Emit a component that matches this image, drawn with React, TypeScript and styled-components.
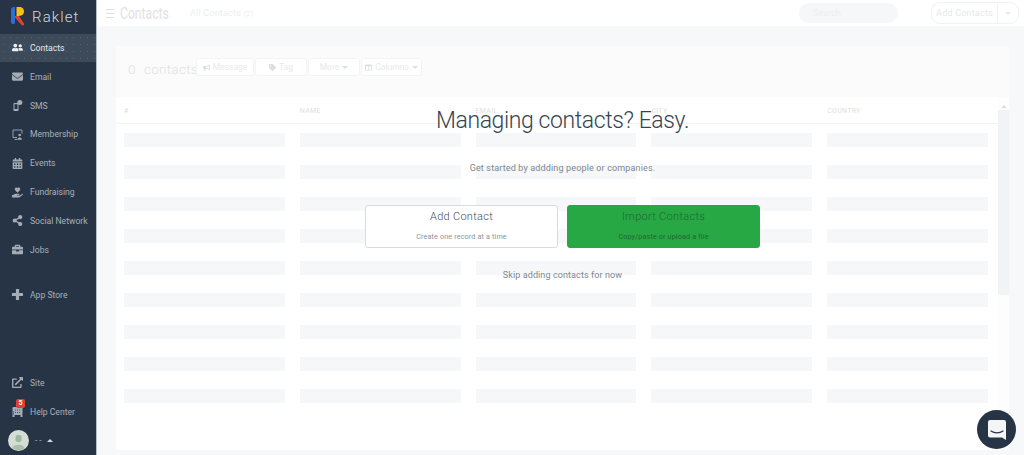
import * as React from 'react';
import styled, { createGlobalStyle } from 'styled-components';
import {
  FaUserFriends, FaEnvelope, FaCalendarAlt, FaHandHoldingHeart, FaShareAlt,
  FaBriefcase, FaExternalLinkAlt, FaBullhorn, FaTag, FaColumns,
} from 'react-icons/fa';

const navy = '#263445';
const font = 'Roboto, "Open Sans", sans-serif';

const Global = createGlobalStyle`
  html, body { margin: 0; padding: 0; height: 100%; overflow: hidden; }
  body { font-family: ${font}; background: #f7f8fa; }
  #root { height: 100%; }
`;

const Page = styled.div`
  display: flex;
  width: 1024px;
  height: 455px;
  overflow: hidden;
`;

const Sidebar = styled.nav`
  width: 96px;
  flex: none;
  display: flex;
  flex-direction: column;
  background: ${navy};
  border-right: 1px solid #b9bfc6;
`;

const Brand = styled.div`
  height: 33.5px;
  flex: none;
  display: flex;
  align-items: center;
  padding-left: 10px;
  gap: 7px;
  color: #d5d9dd;
  font-size: 15px;
  font-weight: 300;
  letter-spacing: 1.1px;
`;

const NavItem = styled.a<{ $active?: boolean }>`
  position: relative;
  height: 28.85px;
  flex: none;
  display: flex;
  align-items: center;
  padding-left: 12px;
  gap: 7px;
  font-size: 8.6px;
  white-space: nowrap;
  color: ${p => (p.$active ? '#e6e9ec' : '#a9b1ba')};
  background: ${p => (p.$active
    ? 'radial-gradient(#566270 0.7px, transparent 0.9px) 0 0 / 7px 7px, #3d4a59'
    : 'transparent')};
  svg { width: 11px; height: 11px; flex: none; color: ${p => (p.$active ? '#eef0f2' : '#a4acb5')}; }
`;

const Spacer = styled.div<{ $h?: number }>`
  flex: ${p => (p.$h ? `0 0 ${p.$h}px` : 1)};
`;

const Badge = styled.span`
  position: absolute;
  left: 16px;
  top: 2px;
  width: 9px;
  height: 9px;
  border-radius: 2px;
  background: #e2402f;
  color: #fff;
  font-size: 7px;
  font-weight: 700;
  line-height: 9px;
  text-align: center;
`;

const UserRow = styled.div`
  height: 29px;
  flex: none;
  display: flex;
  align-items: center;
  gap: 6px;
  padding-left: 8px;
  color: #c6cbd1;
  font-size: 8px;
`;

const Caret = styled.span<{ $up?: boolean; $color?: string }>`
  width: 0;
  height: 0;
  display: inline-block;
  border-left: 3px solid transparent;
  border-right: 3px solid transparent;
  ${p => (p.$up ? 'border-bottom' : 'border-top')}: 3px solid ${p => p.$color || '#d7dadd'};
`;

const Main = styled.main`
  flex: 1;
  min-width: 0;
  display: flex;
  flex-direction: column;
  position: relative;
`;

const TopBar = styled.header`
  height: 26px;
  flex: none;
  background: #fff;
  display: flex;
  align-items: center;
  padding: 0 5px 0 9px;
`;

const Burger = styled.span`
  width: 8px;
  height: 7px;
  border-top: 1px solid #dde0e3;
  border-bottom: 1px solid #dde0e3;
  position: relative;
  margin-right: 6px;
  &::after { content: ''; position: absolute; left: 0; right: 0; top: 3px; height: 1px; background: #dde0e3; }
`;

const PageTitle = styled.h1`
  margin: 0 27px 0 0;
  font-size: 16px;
  font-weight: 400;
  color: #dfe2e5;
  transform: scaleX(0.76);
  transform-origin: left;
  width: 43px;
`;

const Crumb = styled.span`
  font-size: 9px;
  color: #eceef0;
  letter-spacing: 0.2px;
  span { font-size: 7px; margin-left: 3px; }
`;

const Search = styled.div`
  margin-left: auto;
  width: 99px;
  height: 20px;
  box-sizing: border-box;
  padding-left: 14px;
  border-radius: 10px;
  background: #f6f7f9;
  color: #eceef0;
  font-size: 9px;
  line-height: 20px;
`;

const AddSplit = styled.div`
  margin-left: 33px;
  width: 88px;
  height: 22px;
  box-sizing: border-box;
  border: 1px solid #f1f2f4;
  border-radius: 9px;
  display: flex;
  align-items: center;
  color: #e6e8eb;
  font-size: 9px;
  letter-spacing: 0.2px;
`;

const AddLabel = styled.span`
  flex: 1;
  text-align: center;
  line-height: 20px;
  border-right: 1px solid #f1f2f4;
`;

const AddCaret = styled.span`
  width: 20px;
  display: flex;
  justify-content: center;
`;

const Content = styled.section`
  flex: 1;
  min-height: 0;
  padding: 20px 15px 5px 19px;
  display: flex;
`;

const Card = styled.div`
  flex: 1;
  display: flex;
  flex-direction: column;
  background: #fff;
`;

const CardHead = styled.div`
  height: 51px;
  flex: none;
  box-sizing: border-box;
  background: #fbfbfc;
  display: flex;
  align-items: flex-start;
  padding: 12px 0 0 12px;
`;

const Count = styled.div`
  font-size: 13.5px;
  line-height: 18px;
  font-weight: 300;
  color: #dfe2e5;
  letter-spacing: 0.3px;
  width: 68px;
  white-space: nowrap;
  word-spacing: 4.5px;
  padding-top: 2px;
`;

const ToolBtn = styled.div<{ $w: number }>`
  width: ${p => p.$w}px;
  height: 18px;
  margin-right: 1px;
  box-sizing: border-box;
  border: 1px solid #f3f4f5;
  border-radius: 3px;
  background: #fff;
  display: flex;
  align-items: center;
  justify-content: center;
  gap: 3px;
  color: #e8eaec;
  font-size: 8.5px;
  svg { width: 7px; height: 7px; color: #dcdfe2; }
`;

const TableWrap = styled.div`
  flex: 1;
  min-height: 0;
  display: flex;
`;

const Table = styled.div`
  flex: 1;
  min-width: 0;
  padding: 0 9px 0 8px;
`;

const Cols = styled.div`
  display: grid;
  grid-template-columns: repeat(5, 160.8px);
  column-gap: 15px;
`;

const HeadRow = styled(Cols)`
  height: 27px;
  box-sizing: border-box;
  align-items: center;
  border-bottom: 1px solid #f3f4f6;
  margin: 0 -9px 9px -8px;
  padding: 2px 9px 0 8px;
`;

const HeadCell = styled.div`
  font-size: 7px;
  color: #dcdfe2;
  letter-spacing: 0.3px;
`;

const BodyRow = styled(Cols)`
  margin-bottom: 18px;
`;

const Skeleton = styled.div`
  height: 14px;
  background: #f6f7f9;
`;

const Scroll = styled.div`
  width: 11px;
  flex: none;
  display: flex;
  flex-direction: column;
  align-items: center;
  background: #fdfdfd;
  padding-top: 8px;
`;

const Thumb = styled.div`
  width: 11px;
  height: 185px;
  margin-top: 2px;
  background: #f2f3f4;
`;

const Overlay = styled.div`
  position: absolute;
  left: 19px;
  right: 15px;
  top: 0;
  text-align: center;
  display: flex;
  flex-direction: column;
  align-items: center;
`;

const Heading = styled.h2`
  margin: 108px 0 0;
  font-size: 23px;
  line-height: 26px;
  font-weight: 300;
  color: #36444f;
  letter-spacing: -0.4px;
`;

const Sub = styled.p`
  margin: 28px 0 0;
  font-size: 9px;
  line-height: 13px;
  color: #7d8791;
  letter-spacing: 0.15px;
`;

const Choices = styled.div`
  margin-top: 30px;
  display: flex;
  gap: 9px;
`;

const Choice = styled.div<{ $green?: boolean }>`
  width: 193px;
  height: 43px;
  box-sizing: border-box;
  border-radius: 3px;
  border: 1px solid ${p => (p.$green ? '#28a745' : '#d9dcdf')};
  background: ${p => (p.$green ? '#28a745' : '#fff')};
  color: ${p => (p.$green ? '#1c6a34' : '#3f4a55')};
  padding-top: 3px;
`;

const ChoiceTitle = styled.div`
  font-size: 11px;
  line-height: 15px;
  font-weight: 300;
  letter-spacing: 0.3px;
`;

const ChoiceSub = styled.div<{ $green?: boolean }>`
  margin-top: 8px;
  font-size: 7.2px;
  line-height: 10px;
  letter-spacing: 0.15px;
  color: ${p => (p.$green ? '#1c6a34' : '#8a939b')};
`;

const Skip = styled.div`
  margin-top: 21px;
  font-size: 9px;
  line-height: 12px;
  color: #7d8791;
  letter-spacing: 0.1px;
`;

const Chat = styled.div`
  position: absolute;
  right: 8px;
  bottom: 6px;
  width: 39px;
  height: 39px;
  border-radius: 50%;
  background: ${navy};
  display: flex;
  align-items: center;
  justify-content: center;
`;

const Logo = () => (
  <svg width="15" height="20" viewBox="0 0 15 20">
    <path d="M1 2.500C1 1 2 0 4 0h1v15.500c0 1.500-2 2-3 1.200-.7-.5-1-1-1-2z" fill="#2a6fd6" />
    <path d="M6.500 0H9c3.500 0 5 2 5 4.600 0 2.600-1.800 4.400-5 4.400H6.500z" fill="#f5c211" />
    <path d="M5 9h4l5 7.500c.5 1-.2 2-1.200 2-.7 0-1.100-.2-1.500-.8L5 10.500z" fill="#e2402f" />
  </svg>
);

const ChatIcon = () => (
  <svg width="18" height="20" viewBox="0 0 18 20">
    <path d="M2 0h14a2 2 0 0 1 2 2v18l-4-2.600H2a2 2 0 0 1-2-2V2a2 2 0 0 1 2-2z" fill="#f4f5f6" />
    <path d="M3 11c3.500 2.600 8.500 2.600 12 0" fill="none" stroke={navy} strokeWidth="1.200" strokeLinecap="round" />
  </svg>
);

const SmsIcon = () => (
  <svg viewBox="0 0 11 11" fill="currentColor">
    <rect x="1.500" y="3" width="5" height="8" rx="0.800" />
    <rect x="2.500" y="4.200" width="3" height="4.800" fill={navy} />
    <circle cx="7.800" cy="2.500" r="2.500" />
  </svg>
);

const MembershipIcon = () => (
  <svg viewBox="0 0 11 11" fill="none" stroke="currentColor" strokeWidth="0.900">
    <path d="M5 8.500H1V1h9v3.500" />
    <path d="M2.500 10.500h3" />
    <circle cx="7.700" cy="6" r="1.300" fill="currentColor" stroke="none" />
    <path d="M5.500 10.800c0-3 4.400-3 4.400 0z" fill="currentColor" stroke="none" />
  </svg>
);

const PlusIcon = () => (
  <svg viewBox="0 0 11 11" fill="currentColor">
    <path d="M3.900 0h3.200v3.900H11v3.200H7.100V11H3.900V7.100H0V3.900h3.900z" />
  </svg>
);

const HelpIcon = () => (
  <svg viewBox="0 0 11 11" fill="currentColor">
    <rect x="0.500" y="1" width="10" height="8" rx="1" />
    <rect x="0.500" y="9" width="2" height="2" />
    <rect x="8.500" y="9" width="2" height="2" />
    <rect x="0.500" y="5" width="1.500" height="4" fill="#3f78c9" />
    <path d="M3 4h5M3 6.500h5" stroke={navy} strokeWidth="0.700" strokeDasharray="1 1" />
  </svg>
);

const AvatarIcon = () => (
  <svg width="21" height="21" viewBox="0 0 21 21">
    <circle cx="10.500" cy="10.500" r="10.500" fill="#d6ddd6" />
    <rect x="7.500" y="5" width="6" height="7" rx="2" fill="#9fb8a1" />
    <path d="M4.500 18.500c0-5 12-5 12 0-3 2-9 2-12 0z" fill="#a9c0ab" />
  </svg>
);

const navTop = [
  { label: 'Email', icon: <FaEnvelope /> },
  { label: 'SMS', icon: <SmsIcon /> },
  { label: 'Membership', icon: <MembershipIcon /> },
  { label: 'Events', icon: <FaCalendarAlt /> },
  { label: 'Fundraising', icon: <FaHandHoldingHeart /> },
  { label: 'Social Network', icon: <FaShareAlt /> },
  { label: 'Jobs', icon: <FaBriefcase /> },
];

const columns = ['#', 'NAME', 'EMAIL', 'CITY', 'COUNTRY'];
const rows = [0, 1, 2, 3, 4, 5, 6, 7, 8];

export default function App() {
  return (
    <Page>
      <Global />
      <Sidebar>
        <Brand><Logo />Raklet</Brand>
        <NavItem $active><FaUserFriends />Contacts</NavItem>
        {navTop.map(item => (
          <NavItem key={item.label}>{item.icon}{item.label}</NavItem>
        ))}
        <Spacer $h={16} />
        <NavItem><PlusIcon />App Store</NavItem>
        <Spacer />
        <NavItem><FaExternalLinkAlt />Site</NavItem>
        <NavItem><HelpIcon />Help Center<Badge>5</Badge></NavItem>
        <UserRow><AvatarIcon />- - <Caret $up /></UserRow>
      </Sidebar>
      <Main>
        <TopBar>
          <Burger />
          <PageTitle>Contacts</PageTitle>
          <Crumb>All Contacts<span>(2)</span></Crumb>
          <Search>Search</Search>
          <AddSplit>
            <AddLabel>Add Contacts</AddLabel>
            <AddCaret><Caret $color="#e6e8eb" /></AddCaret>
          </AddSplit>
        </TopBar>
        <Content>
          <Card>
            <CardHead>
              <Count>0 contacts</Count>
              <ToolBtn $w={58}><FaBullhorn />Message</ToolBtn>
              <ToolBtn $w={52}><FaTag />Tag</ToolBtn>
              <ToolBtn $w={52}>More <Caret $color="#dcdfe2" /></ToolBtn>
              <ToolBtn $w={61}><FaColumns />Columns <Caret $color="#dcdfe2" /></ToolBtn>
            </CardHead>
            <TableWrap>
              <Table>
                <HeadRow>
                  {columns.map(c => <HeadCell key={c}>{c}</HeadCell>)}
                </HeadRow>
                {rows.map(r => (
                  <BodyRow key={r}>
                    {columns.map(c => <Skeleton key={c} />)}
                  </BodyRow>
                ))}
              </Table>
              <Scroll>
                <Caret $up $color="#dcdfe2" />
                <Thumb />
              </Scroll>
            </TableWrap>
          </Card>
        </Content>
        <Overlay>
          <Heading>Managing contacts? Easy.</Heading>
          <Sub>Get started by addding people or companies.</Sub>
          <Choices>
            <Choice>
              <ChoiceTitle>Add Contact</ChoiceTitle>
              <ChoiceSub>Create one record at a time</ChoiceSub>
            </Choice>
            <Choice $green>
              <ChoiceTitle>Import Contacts</ChoiceTitle>
              <ChoiceSub $green>Copy/paste or upload a file</ChoiceSub>
            </Choice>
          </Choices>
          <Skip>Skip adding contacts for now</Skip>
        </Overlay>
        <Chat><ChatIcon /></Chat>
      </Main>
    </Page>
  );
}
